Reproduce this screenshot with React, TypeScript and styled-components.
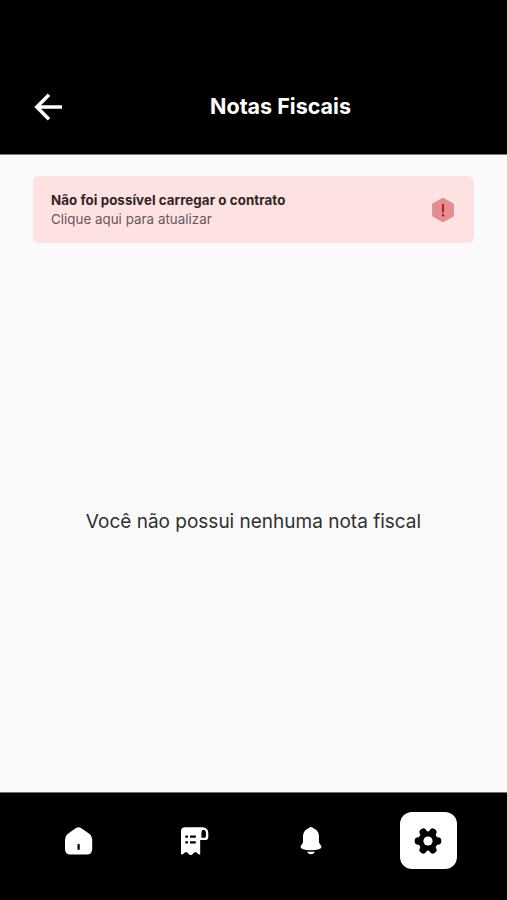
import React from "react";
import styled, { createGlobalStyle } from "styled-components";

const GlobalStyle = createGlobalStyle`
  *, *::before, *::after { box-sizing: border-box; }
  body { margin: 0; background: #000; }
`;

const Screen = styled.div`
  display: flex;
  flex-direction: column;
  height: 900px;
  background: #fafafa;
  font-family: Inter, sans-serif;
  color: #303030;
`;

const PlainButton = styled.button`
  display: flex;
  align-items: center;
  padding: 0;
  border: 0;
  background: none;
  color: inherit;
  font: inherit;
  cursor: pointer;
`;

const Header = styled.header`
  display: grid;
  grid-template-columns: 28px 1fr;
  align-items: center;
  flex: none;
  height: 155px;
  padding: 60px 33px 0 34px;
  border-bottom: 1px solid #808080;
  background: #000;
  color: #fff;
`;

const Title = styled.h1`
  margin: 0;
  padding-bottom: 2px;
  padding-left: 25px;
  text-align: center;
  font-size: 21.5px;
  line-height: 28px;
  font-weight: 700;
  white-space: nowrap;
`;

const Content = styled.main`
  display: flex;
  flex-direction: column;
  flex: 1;
  padding: 21px 33px 0;
`;

const Alert = styled(PlainButton)`
  justify-content: space-between;
  flex: none;
  height: 67px;
  padding: 0 17px 0 18px;
  border-radius: 6px;
  background: #fee1e1;
  text-align: left;
`;

const AlertText = styled.span`
  display: flex;
  flex-direction: column;
`;

const AlertTitle = styled.strong`
  font-size: 13.3px;
  line-height: 19px;
  font-weight: 700;
  letter-spacing: 0.075px;
  color: #302527;
`;

const AlertHint = styled.span`
  font-size: 13.3px;
  line-height: 19px;
  letter-spacing: 0.05px;
  color: #65585a;
`;

const EmptyMessage = styled.p`
  display: flex;
  flex: 1;
  align-items: center;
  justify-content: center;
  margin: 0;
  padding-top: 9px;
  font-size: 19px;
  line-height: 26px;
  white-space: nowrap;
`;

const NavBar = styled.nav`
  display: grid;
  grid-template-columns: repeat(4, 116.5px);
  justify-content: center;
  flex: none;
  height: 108px;
  padding: 19px 0.5px 0 0;
  border-top: 1px solid #707070;
  background: #000;
`;

const NavItem = styled(PlainButton)<{ $active?: boolean }>`
  justify-content: center;
  justify-self: center;
  width: 57px;
  height: 57px;
  border-radius: 12px;
  background: ${({ $active }) => ($active ? "#fff" : "transparent")};
  color: ${({ $active }) => ($active ? "#000" : "#fff")};
`;

const Icon = styled.svg`
  display: block;
  width: 28px;
  height: 28px;
`;

const ArrowIcon = () => (
  <Icon viewBox="0 0 28 28" fill="none" stroke="currentColor" strokeWidth="3.5">
    <path d="M28 14H3M15 1.8 2.8 14 15 26.2" />
  </Icon>
);

const WarningIcon = () => (
  <Icon viewBox="0 0 28 28">
    <path
      d="M14 3.4 23.4 8.5V19.5L14 24.6 4.6 19.5V8.5Z"
      fill="#e38e90"
      stroke="#e38e90"
      strokeWidth="3"
      strokeLinejoin="round"
    />
    <path d="M14 8.7v7" stroke="#b91e2c" strokeWidth="2.1" strokeLinecap="round" />
    <circle cx="14" cy="19.2" r="1.25" fill="#b91e2c" />
  </Icon>
);

const HomeIcon = () => (
  <Icon viewBox="0 0 28 28">
    <path
      d="M11 1.1Q13.5 -.6 16 1.1L24.6 7Q27.2 9 27.2 12.5V22Q27.2 27.6 21.6 27.6H5.6Q0 27.6 0 22V12.5Q0 9 2.6 7Z"
      fill="currentColor"
    />
    <path d="M13.6 17.9v4" stroke="#000" strokeWidth="2.3" strokeLinecap="round" />
  </Icon>
);

const ReceiptIcon = () => (
  <Icon viewBox="0 0 28 28">
    <path
      fillRule="evenodd"
      fill="currentColor"
      d="M4 .3H21.7Q27.3 .8 27.3 6.2V10Q27.3 13.1 24.2 13.1H19.2V27.6C16.5 27.6 16.8 25.2 14.3 25.2S12.2 28 9.8 28 7.5 25.2 5.2 25.2 2.8 27.6 0 27.6V4.3Q0 .3 4 .3ZM21.8 2.7Q20.4 3.5 20.4 6V10.8H23.3Q24.9 10.8 24.9 9.3V6Q24.9 2.8 21.8 2.7Z"
    />
    <path d="M4.3 9.7h2.6M9 9.7h5.8M4.3 15.3h2.6M9 15.3h5.8" stroke="#000" strokeWidth="2.3" />
  </Icon>
);

const BellIcon = () => (
  <Icon viewBox="1 .4 28 28" fill="currentColor">
    <path d="M14 .5C15.5 .5 16.2 1.7 17.3 2.2C20.6 3.7 22 6.5 22 10V15.5C22 17.5 24.5 18.5 24.5 20.5Q24.5 23.6 14 23.6T3.5 20.5C3.5 18.5 6 17.5 6 15.5V10C6 6.5 7.4 3.7 10.7 2.2C11.8 1.7 12.5 .5 14 .5Z" />
    <path d="M10.3 24.9Q14 25.4 17.7 24.9Q17 27.7 14 27.7T10.3 24.9Z" />
  </Icon>
);

const GearIcon = () => (
  <Icon viewBox="0 0 28 28">
    <g stroke="currentColor" strokeWidth="7.4" strokeLinecap="round">
      <path d="M4.3 14H23.7M9.2 5.2 18.8 22.8M18.8 5.2 9.2 22.8" />
    </g>
    <circle cx="14" cy="14" r="9.8" fill="currentColor" />
    <circle cx="14" cy="14" r="4.6" fill="#fff" />
  </Icon>
);

const App = () => (
  <>
    <GlobalStyle />
    <Screen>
      <Header>
        <PlainButton aria-label="Voltar">
          <ArrowIcon />
        </PlainButton>
        <Title>Notas Fiscais</Title>
      </Header>
      <Content>
        <Alert>
          <AlertText>
            <AlertTitle>Não foi possível carregar o contrato</AlertTitle>
            <AlertHint>Clique aqui para atualizar</AlertHint>
          </AlertText>
          <WarningIcon />
        </Alert>
        <EmptyMessage>Você não possui nenhuma nota fiscal</EmptyMessage>
      </Content>
      <NavBar>
        <NavItem aria-label="Início"><HomeIcon /></NavItem>
        <NavItem aria-label="Faturas"><ReceiptIcon /></NavItem>
        <NavItem aria-label="Notificações"><BellIcon /></NavItem>
        <NavItem $active aria-label="Configurações"><GearIcon /></NavItem>
      </NavBar>
    </Screen>
  </>
);

export default App;
